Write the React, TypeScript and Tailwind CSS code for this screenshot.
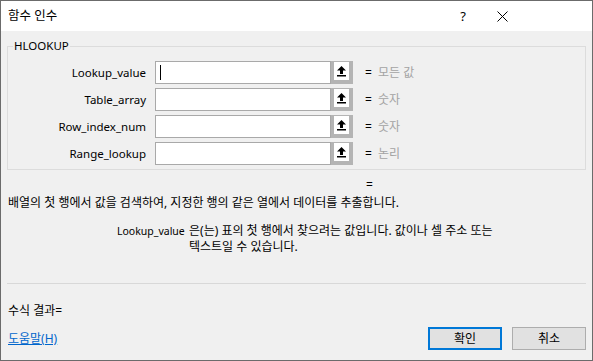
const font = { fontFamily: '"Noto Sans", "Noto Sans CJK KR", sans-serif' };

const args = [
  { name: "Lookup_value", value: "모든 값", focused: true },
  { name: "Table_array", value: "숫자" },
  { name: "Row_index_num", value: "숫자" },
  { name: "Range_lookup", value: "논리" },
];

function RefButton() {
  return (
    <div className="w-[22px] h-[23px] bg-[#b4b4b4] flex pt-[1px] pl-[3px]">
      <div className="w-[15px] h-[18px] bg-white flex items-center justify-center">
        <svg width="9" height="11" viewBox="0 0 9 11">
          <path d="M4.5 0 L9 4.5 L6 4.5 L6 8 L3 8 L3 4.5 L0 4.5 Z" fill="#000" />
          <rect x="0" y="9" width="9" height="1.5" fill="#000" />
        </svg>
      </div>
    </div>
  );
}

export default function App() {
  return (
    <div
      className="w-[593px] h-[361px] border border-[#6b6b6b] flex flex-col text-[12px] leading-[16px] text-black overflow-hidden"
      style={font}
    >
      {/* Title bar */}
      <div className="h-[30px] bg-white flex items-center pl-[7px] shrink-0">
        <span className="text-[12.5px]">함수 인수</span>
        <div className="flex-1" />
        <div className="w-[40px] flex justify-center text-[13px] pl-[2px]">?</div>
        <div className="w-[40px] flex justify-center">
          <svg width="11" height="11" viewBox="0 0 11 11">
            <path d="M0.5 0.5 L10.5 10.5 M10.5 0.5 L0.5 10.5" stroke="#000" strokeWidth="1" />
          </svg>
        </div>
        <div className="w-[70px]" />
      </div>

      {/* Body */}
      <div className="flex-1 bg-[#f0f0f0] px-[6px] pt-[8px] flex flex-col">
        <fieldset className="border border-[#dcdcdc] pl-0 pr-0 pb-[4px] pt-[8px] m-0">
          <legend className="ml-[5px] px-[1px] leading-[14px] text-[11.5px]">HLOOKUP</legend>
          <div className="flex flex-col gap-[4px]">
            {args.map((a) => (
              <div key={a.name} className="flex items-center h-[23px]">
                <div className="w-[138px] text-right text-[11.5px]">{a.name}</div>
                <div className="ml-[9px] w-[176px] h-[23px] bg-white border border-[#a9a9a9] flex items-center pl-[4px]">
                  {a.focused && <div className="w-px h-[15px] bg-black" />}
                </div>
                <RefButton />
                <div className="ml-[12px] w-[13px]">=</div>
                <div className="text-[#a3a3a3]">{a.value}</div>
              </div>
            ))}
          </div>
        </fieldset>

        <div className="mt-[7px] pl-[359px]">=</div>
        <div className="mt-[2px] pl-[1px]">
          배열의 첫 행에서 값을 검색하여, 지정한 행의 같은 열에서 데이터를 추출합니다.
        </div>
        <div className="mt-[12px] flex pl-[110px]">
          <div className="w-[72px] shrink-0 whitespace-nowrap text-[10.5px]">Lookup_value</div>
          <div>
            은(는) 표의 첫 행에서 찾으려는 값입니다. 값이나 셀 주소 또는
            <br />
            텍스트일 수 있습니다.
          </div>
        </div>

        <div className="mt-[28px] h-px bg-[#d8d8d8]" />

        <div className="mt-[19px] pl-[1px]">수식 결과=</div>

        <div className="mt-[8px] flex items-center">
          <a className="pl-[1px] text-[#0066cc] underline">도움말(H)</a>
          <div className="flex-1" />
          <button className="w-[74px] h-[23px] bg-[#e1e1e1] border-2 border-[#0078d7]">확인</button>
          <button className="ml-[10px] w-[74px] h-[23px] bg-[#e1e1e1] border border-[#adadad]">취소</button>
        </div>
      </div>
    </div>
  );
}
